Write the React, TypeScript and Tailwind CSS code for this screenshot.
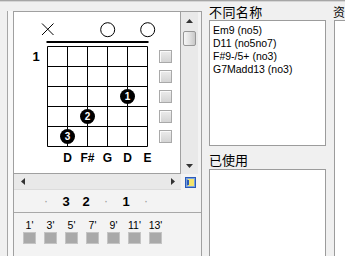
import React from 'react';

const strings = [33.5, 53.5, 73.5, 93.5, 113.5, 133.5];
const frets = [34.5, 54.5, 74.5, 94.5, 114.5, 134.5];

const dots = [
  { x: 113.5, y: 84.5, n: 1 },
  { x: 73.5, y: 104.5, n: 2 },
  { x: 53.5, y: 124.5, n: 3 },
];

const noteLabels = ['', 'D', 'F#', 'G', 'D', 'E'];
const fingers = ['·', '3', '2', '·', '1', '·'];
const positions = ["1'", "3'", "5'", "7'", "9'", "11'", "13'"];
const names = ['Em9 (no5)', 'D11 (no5no7)', 'F#9-/5+ (no3)', 'G7Madd13 (no3)'];

const Arrow: React.FC<{ dir: 'up' | 'down' | 'left' | 'right' }> = ({ dir }) => {
  const d = {
    up: 'M0 4 L3.5 0 L7 4 Z',
    down: 'M0 0 L7 0 L3.5 4 Z',
    left: 'M4 0 L4 7 L0 3.5 Z',
    right: 'M0 0 L4 3.5 L0 7 Z',
  }[dir];
  const vertical = dir === 'up' || dir === 'down';
  return (
    <svg width={vertical ? 7 : 4} height={vertical ? 4 : 7}>
      <path d={d} fill="#333" />
    </svg>
  );
};

const ChordDiagram: React.FC = () => (
  <svg width="145" height="161" className="shrink-0">
    {/* muted and open string marks */}
    <path d="M28 11.5 L39.5 23 M39.5 11.5 L28 23" stroke="black" strokeWidth="1" fill="none" />
    <circle cx="93.7" cy="17.7" r="7" fill="none" stroke="black" />
    <circle cx="133.7" cy="17.7" r="7" fill="none" stroke="black" />
    {/* nut */}
    <rect x="32.5" y="29" width="102" height="2" fill="black" />
    {strings.map(x => (
      <line key={x} x1={x} y1={34.5} x2={x} y2={134.5} stroke="black" />
    ))}
    {frets.map(y => (
      <line key={y} x1={33.5} y1={y} x2={133.5} y2={y} stroke="black" />
    ))}
    <text x="22" y="49" fontSize="13" fontWeight="bold" textAnchor="middle" fontFamily="Liberation Sans, Arial, sans-serif">
      1
    </text>
    {dots.map(d => (
      <g key={d.n}>
        <circle cx={d.x} cy={d.y} r="7.5" fill="black" />
        <text
          x={d.x}
          y={d.y + 3.6}
          fontSize="10"
          fontWeight="bold"
          fill="white"
          textAnchor="middle"
          fontFamily="Liberation Sans, Arial, sans-serif"
        >
          {d.n}
        </text>
      </g>
    ))}
    {noteLabels.map((n, i) => (
      <text
        key={i}
        x={strings[i]}
        y="150"
        fontSize="12"
        fontWeight="bold"
        textAnchor="middle"
        fontFamily="Liberation Sans, Arial, sans-serif"
      >
        {n}
      </text>
    ))}
  </svg>
);

export default function App() {
  return (
    <div className="w-[345px] h-[256px] overflow-hidden bg-[#f0f0f0] flex flex-col font-['Liberation_Sans',Arial,sans-serif] text-black">
      <div className="h-[1px] bg-[#a6a6a6] shrink-0" />
      <div className="h-[1px] bg-[#d6d6d6] shrink-0" />

      <div className="flex flex-1 min-h-0">
        {/* left edge strip */}
        <div className="w-[7px] shrink-0" />
        <div className="w-[6px] shrink-0 mt-[9px] border-l border-[#a6a6a6] bg-[#f8f8f8]" />

        {/* chord panel */}
        <div className="w-[189px] shrink-0 mt-[9px] border border-b-0 border-[#a0a0a0] bg-[#f3f3f3] flex flex-col">
          <div className="flex">
            <div className="flex flex-col">
              {/* canvas */}
              <div className="w-[167px] h-[162px] bg-white border-r border-b border-[#a0a0a0] flex">
                <ChordDiagram />
                <div className="flex flex-col pt-[38px] gap-[7px]">
                  {[0, 1, 2, 3, 4].map(i => (
                    <div
                      key={i}
                      className="w-[13px] h-[13px] border border-[#a9a9a9] bg-linear-to-b from-[#ececec] to-[#d4d4d4] shadow-[inset_1px_1px_0_#fafafa]"
                    />
                  ))}
                </div>
              </div>
              {/* horizontal scrollbar */}
              <div className="w-[167px] h-[16px] bg-[#e9e9e9] border-b border-[#dcdcdc] flex items-center justify-between">
                <div className="w-[17px] flex justify-center">
                  <Arrow dir="left" />
                </div>
                <div className="w-[17px] flex justify-center">
                  <Arrow dir="right" />
                </div>
              </div>
            </div>

            <div className="flex flex-col">
              {/* vertical scrollbar */}
              <div className="w-[17px] h-[162px] bg-[#e9e9e9] flex flex-col items-center">
                <div className="h-[17px] flex items-center justify-center">
                  <Arrow dir="up" />
                </div>
                <div className="mt-[2px] w-[13px] h-[15px] rounded-[2px] border border-[#979797] bg-linear-to-r from-[#f6f6f6] via-[#e2e2e2] to-[#c8c8c8]" />
                <div className="flex-1" />
                <div className="h-[17px] flex items-center justify-center">
                  <Arrow dir="down" />
                </div>
              </div>
              {/* corner icon */}
              <div className="h-[16px] pl-[4px] pt-[3px]">
                <svg width="11" height="11">
                  <rect x="0.5" y="0.5" width="10" height="10" fill="#7da2dc" stroke="#2a5bb8" />
                  <rect x="3" y="2" width="6" height="7" fill="#f3e46c" />
                  <rect x="2" y="3" width="2" height="5" fill="#2a5bb8" />
                </svg>
              </div>
            </div>
          </div>

          {/* finger row */}
          <div className="h-[22px] flex items-center pl-[22px]">
            {fingers.map((f, i) => (
              <div
                key={i}
                className={
                  f === '·'
                    ? 'w-[20px] text-center text-[12px] text-[#9a9a9a]'
                    : 'w-[20px] text-center text-[13px] font-bold leading-none'
                }
              >
                {f}
              </div>
            ))}
          </div>

          <div className="h-[1px] bg-[#a8a8a8]" />

          {/* position row */}
          <div className="flex gap-[8px] pl-[9px] pt-[6px]">
            {positions.map(p => (
              <div key={p} className="w-[13px] flex flex-col items-center">
                <div className="text-[10.5px] leading-[12px] whitespace-nowrap">{p}</div>
                <div className="mt-[1px] w-[13px] h-[12px] bg-[#a9a9a9] border border-[#c4c4c4]" />
              </div>
            ))}
          </div>
        </div>

        <div className="w-[7px] shrink-0" />

        {/* names column */}
        <div className="w-[117px] shrink-0 flex flex-col pt-[3px]">
          <div className="h-[15px] text-[13px] leading-[14px] tracking-[0.4px] font-['Noto_Sans_CJK_SC',sans-serif]">
            不同名称
          </div>
          <div className="h-[126px] bg-white border border-[#9c9c9c] pl-[3px] pt-[3px]">
            {names.map(n => (
              <div key={n} className="text-[10.5px] leading-[13px] whitespace-nowrap">
                {n}
              </div>
            ))}
          </div>
          <div className="mt-[7px] h-[16px] text-[13px] leading-[14px] font-['Noto_Sans_CJK_SC',sans-serif]">
            已使用
          </div>
          <div className="flex-1 bg-white border border-b-0 border-[#9c9c9c]" />
        </div>

        <div className="w-[8px] shrink-0" />

        {/* third column, cut off at the window edge */}
        <div className="flex-1 flex flex-col pt-[3px] min-w-0">
          <div className="h-[15px] -ml-[1px] text-[12px] leading-[14px] whitespace-nowrap font-['Noto_Sans_CJK_SC',sans-serif]">
            资
          </div>
          <div className="flex-1 bg-white border border-r-0 border-b-0 border-[#9c9c9c]" />
        </div>
      </div>
    </div>
  );
}
